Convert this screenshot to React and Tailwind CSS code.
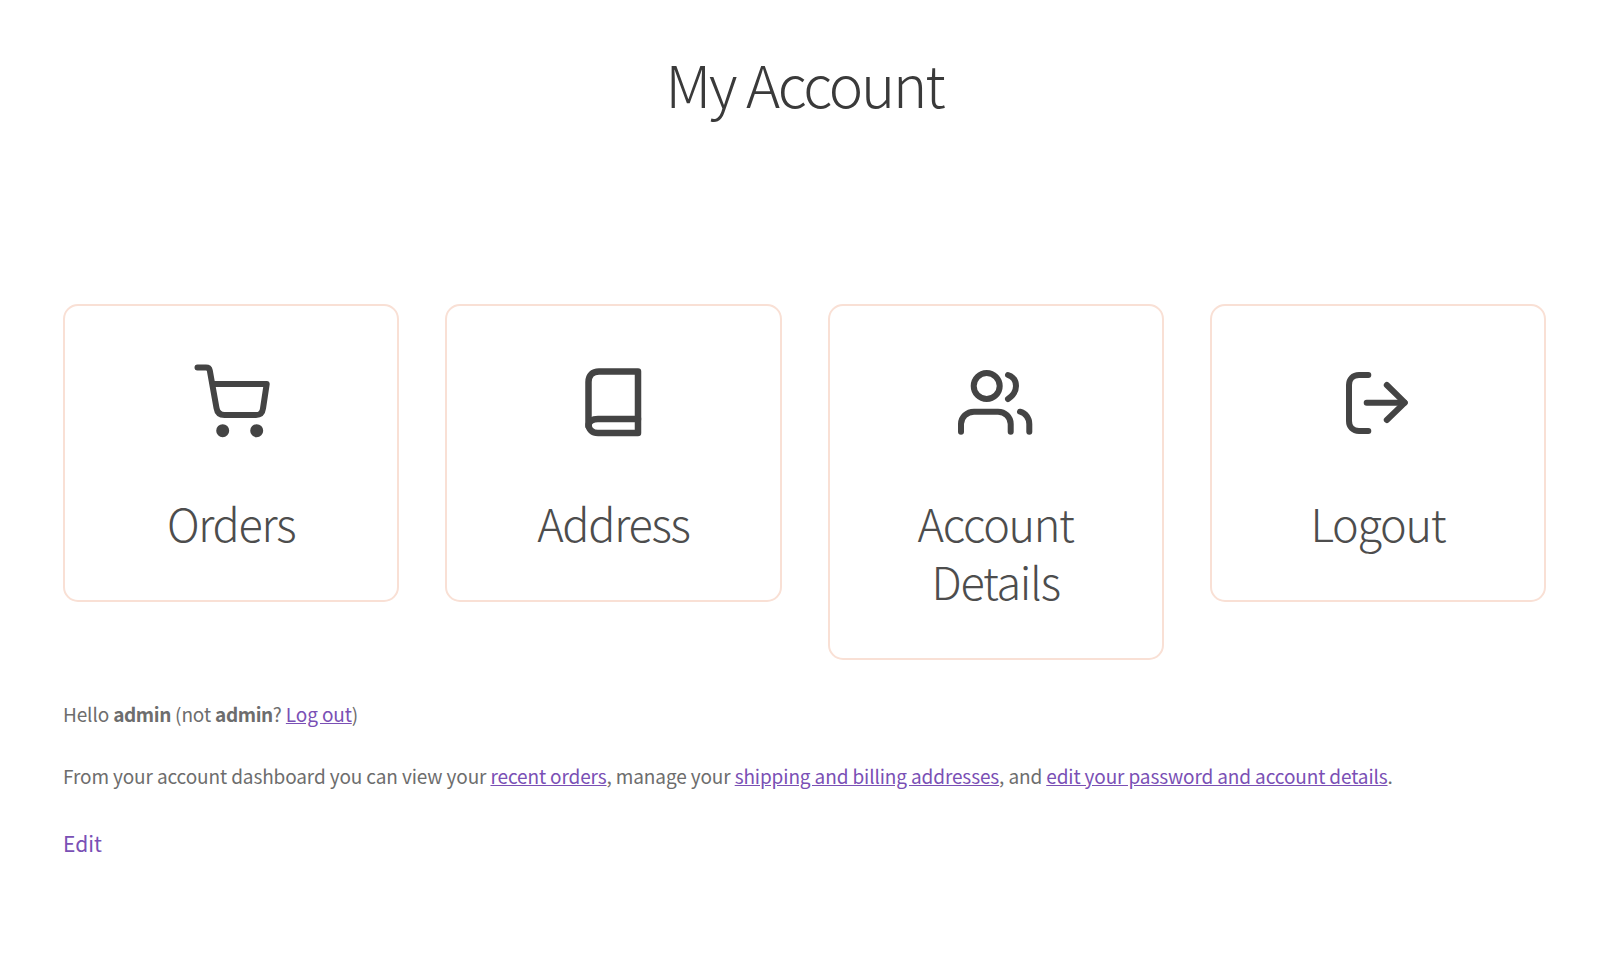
const cards = [
  {
    label: 'Orders',
    icon: (
      <svg width="80" height="80" viewBox="0 0 80 80" fill="none" stroke="currentColor" strokeWidth="6" strokeLinecap="round" strokeLinejoin="round">
        <path d="M6.500 6.500H15c2 0 3.400 1 3.800 3L25.500 47c.7 4.500 3.500 7 8 7H65c4 0 6.500-2.500 7-6.500L75.700 23H22" />
        <circle cx="31.700" cy="69.700" r="3.500" fill="currentColor" />
        <circle cx="65.700" cy="69.700" r="3.500" fill="currentColor" />
      </svg>
    ),
  },
  {
    label: 'Address',
    icon: (
      <svg width="80" height="80" viewBox="0 0 80 80" fill="none" stroke="currentColor" strokeWidth="6.500" strokeLinecap="round" strokeLinejoin="round">
        <path d="M65 10.500H26C19.500 10.500 15.500 14.500 15.500 21V63C15.500 68.500 19.500 72 25 72H65Z" />
        <path d="M65 58H25C19.500 58 15.500 60 15.500 65" />
      </svg>
    ),
  },
  {
    label: 'Account Details',
    icon: (
      <svg width="80" height="80" viewBox="0 0 80 80" fill="none" stroke="currentColor" strokeWidth="6" strokeLinecap="round" strokeLinejoin="round">
        <circle cx="30.700" cy="25" r="13" />
        <path d="M5 70.700V63C5 56 11 50.700 18 50.700H42C49 50.700 54.700 56 54.700 63V70.700" />
        <path d="M52 14C58 16 60 20.500 60 25S58 34 52 38" />
        <path d="M64 50.700C69.500 52 73.300 57 73.300 63V70.700" />
      </svg>
    ),
  },
  {
    label: 'Logout',
    icon: (
      <svg width="80" height="80" viewBox="0 0 80 80" fill="none" stroke="currentColor" strokeWidth="6" strokeLinecap="round" strokeLinejoin="round">
        <path d="M30.300 14H21C15 14 11 18 11 24V60C11 66 15 70 21 70H30.300" />
        <path d="M28.700 41.700H66.500" />
        <path d="M48.800 24L66.800 41.700L48.800 59" />
      </svg>
    ),
  },
];

function App() {
  return (
    <div className="min-h-[979px] bg-white pt-[43px] pr-[54px] pl-[63px] font-['Noto_Sans_CJK_SC',sans-serif] text-[#6d6d6d]">
      <h1 className="text-center text-[58px] font-extralight leading-[80px] tracking-[-2.2px] text-[#3a3a3a]">My Account</h1>

      <div className="mt-[181px] grid grid-cols-4 items-start gap-[46px]">
        {cards.map((card) => (
          <div
            key={card.label}
            className="flex flex-col items-center rounded-[15px] border-2 border-[#f9e0d5] px-5 pt-[55px] pb-[48px] text-center"
          >
            <div className="text-[#444444]">{card.icon}</div>
            <div className="mt-[53px] text-[45px] font-extralight leading-[58px] tracking-[-1.3px] text-[#4d4d4d]">{card.label}</div>
          </div>
        ))}
      </div>

      <p className="mt-[39px] text-[19px] leading-[30px] tracking-[-0.12px]">
        Hello <strong className="font-bold tracking-[-0.4px]">admin</strong> (not{' '}
        <strong className="font-bold tracking-[-0.4px]">admin</strong>?{' '}
        <a className="text-[#7a50b5] underline">Log out</a>)
      </p>
      <p className="mt-[32px] text-[19px] leading-[30px] tracking-[-0.12px]">
        From your account dashboard you can view your <a className="text-[#7a50b5] underline">recent orders</a>, manage
        your <a className="text-[#7a50b5] underline">shipping and billing addresses</a>, and{' '}
        <a className="text-[#7a50b5] underline">edit your password and account details</a>.
      </p>
      <p className="mt-[36px] text-[21px] leading-[32px] text-[#7a50b5]">Edit</p>
    </div>
  );
}

export default App;
